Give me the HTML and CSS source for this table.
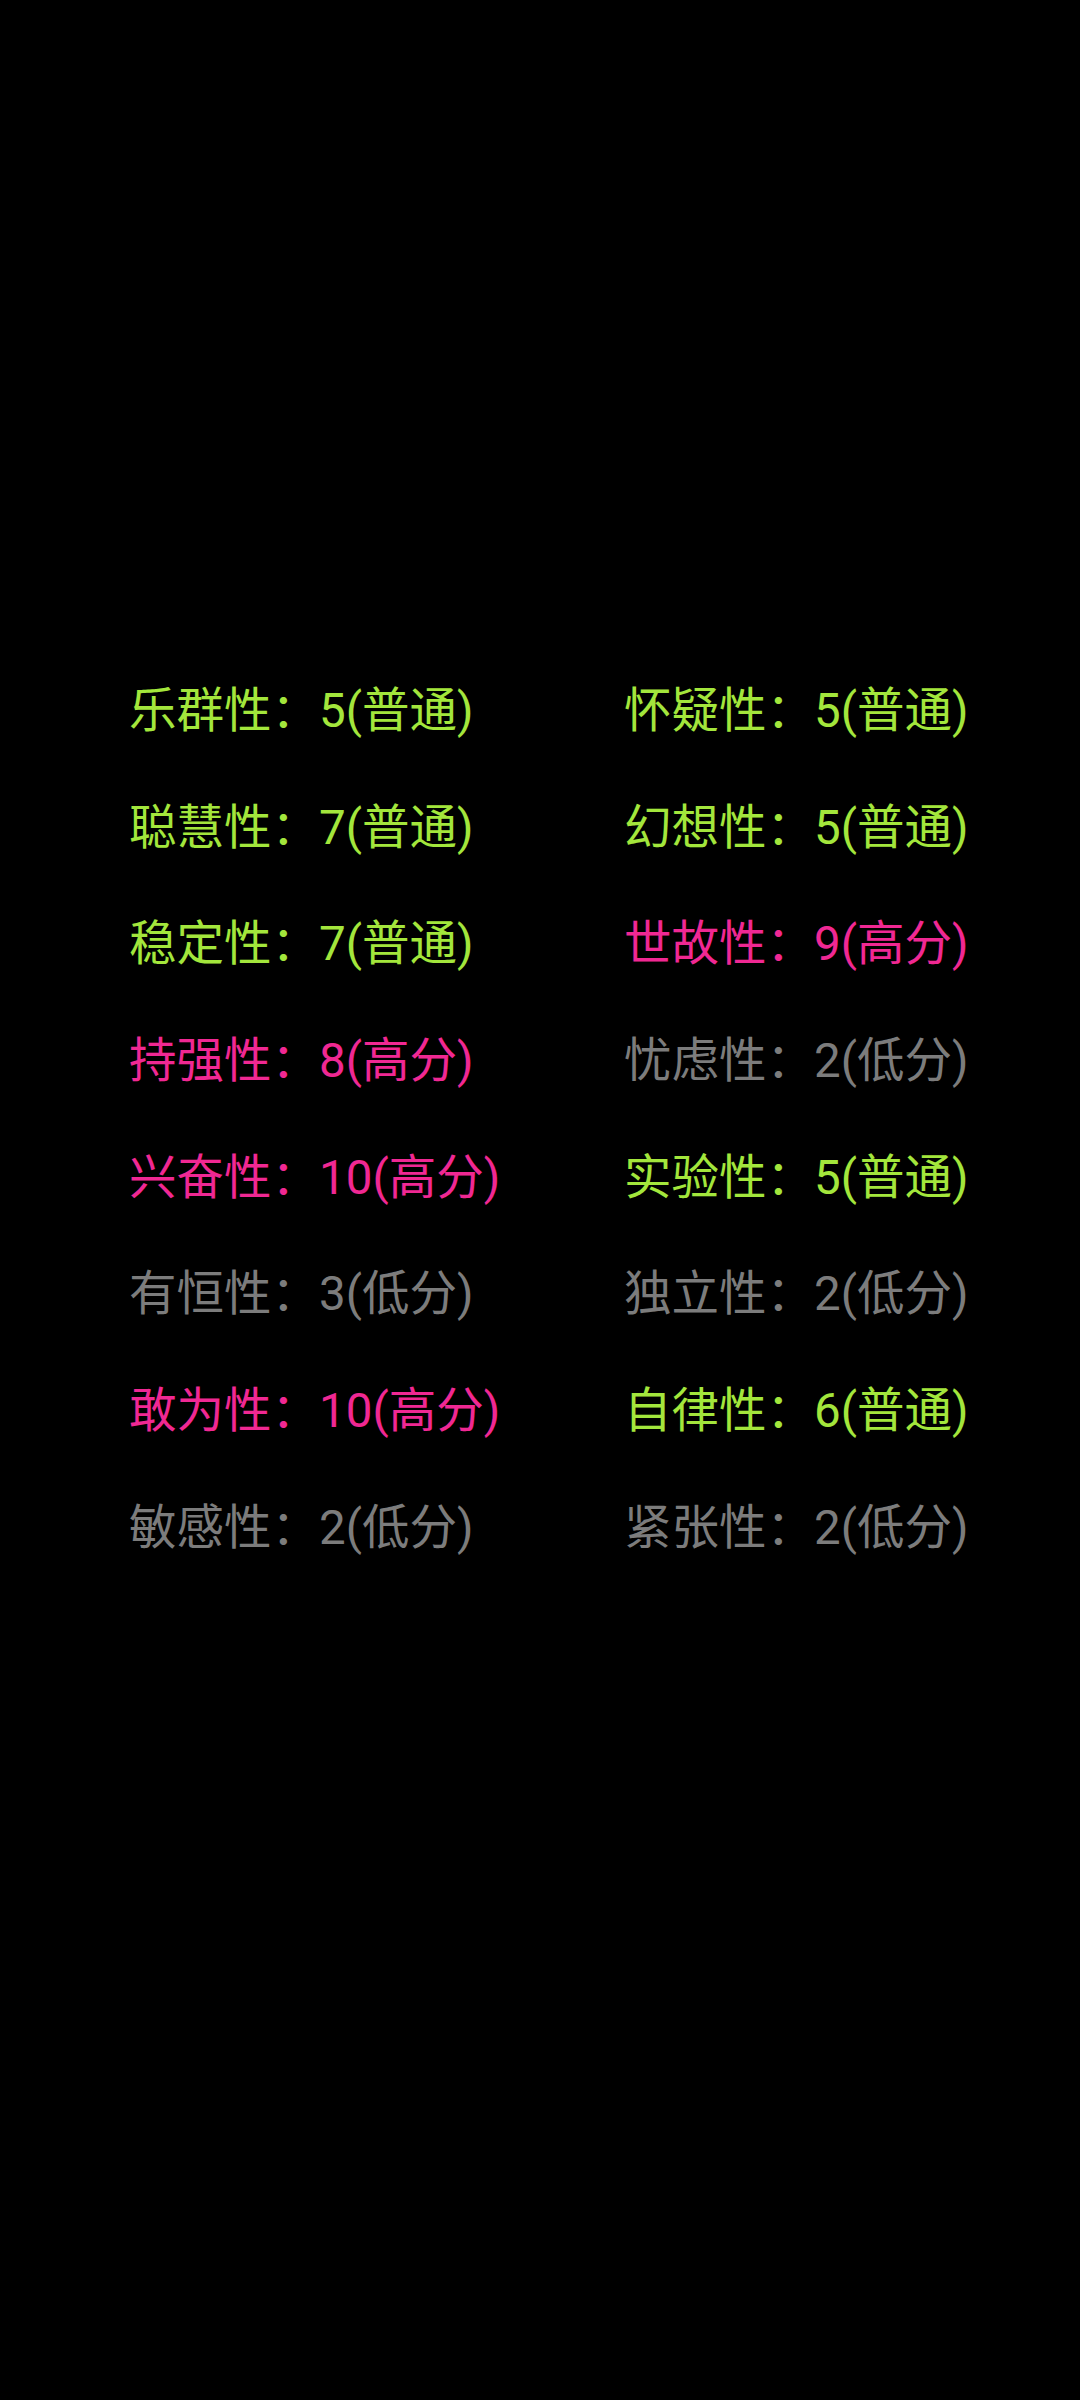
FILE: index.html
```html
<!DOCTYPE html>
<html lang="zh-CN">
<head>
<meta charset="utf-8">
<link rel="stylesheet" href="styles.css">
</head>
<body>
<div class="grid">
  <div class="item ok">乐群性：5(普通)</div>
  <div class="item ok">怀疑性：5(普通)</div>
  <div class="item ok">聪慧性：7(普通)</div>
  <div class="item ok">幻想性：5(普通)</div>
  <div class="item ok">稳定性：7(普通)</div>
  <div class="item high">世故性：9(高分)</div>
  <div class="item high">持强性：8(高分)</div>
  <div class="item low">忧虑性：2(低分)</div>
  <div class="item high">兴奋性：10(高分)</div>
  <div class="item ok">实验性：5(普通)</div>
  <div class="item low">有恒性：3(低分)</div>
  <div class="item low">独立性：2(低分)</div>
  <div class="item high">敢为性：10(高分)</div>
  <div class="item ok">自律性：6(普通)</div>
  <div class="item low">敏感性：2(低分)</div>
  <div class="item low">紧张性：2(低分)</div>
</div>
</body>
</html>
```
FILE: styles.css
```css
html, body {
  margin: 0;
  padding: 0;
  background: #000;
  width: 1080px;
  height: 2400px;
}
.grid {
  display: grid;
  grid-template-columns: 495px 495px;
  grid-auto-rows: 116.7px;
  padding-left: 129px;
  padding-top: 653px;
}
.item {
  font-family: Roboto, "Noto Sans CJK SC", sans-serif;
  font-size: 47.5px;
  line-height: 116.7px;
  white-space: nowrap;
}
.ok { color: #a3e63c; }
.high { color: #f02893; }
.low { color: #7c7c7c; }
```
